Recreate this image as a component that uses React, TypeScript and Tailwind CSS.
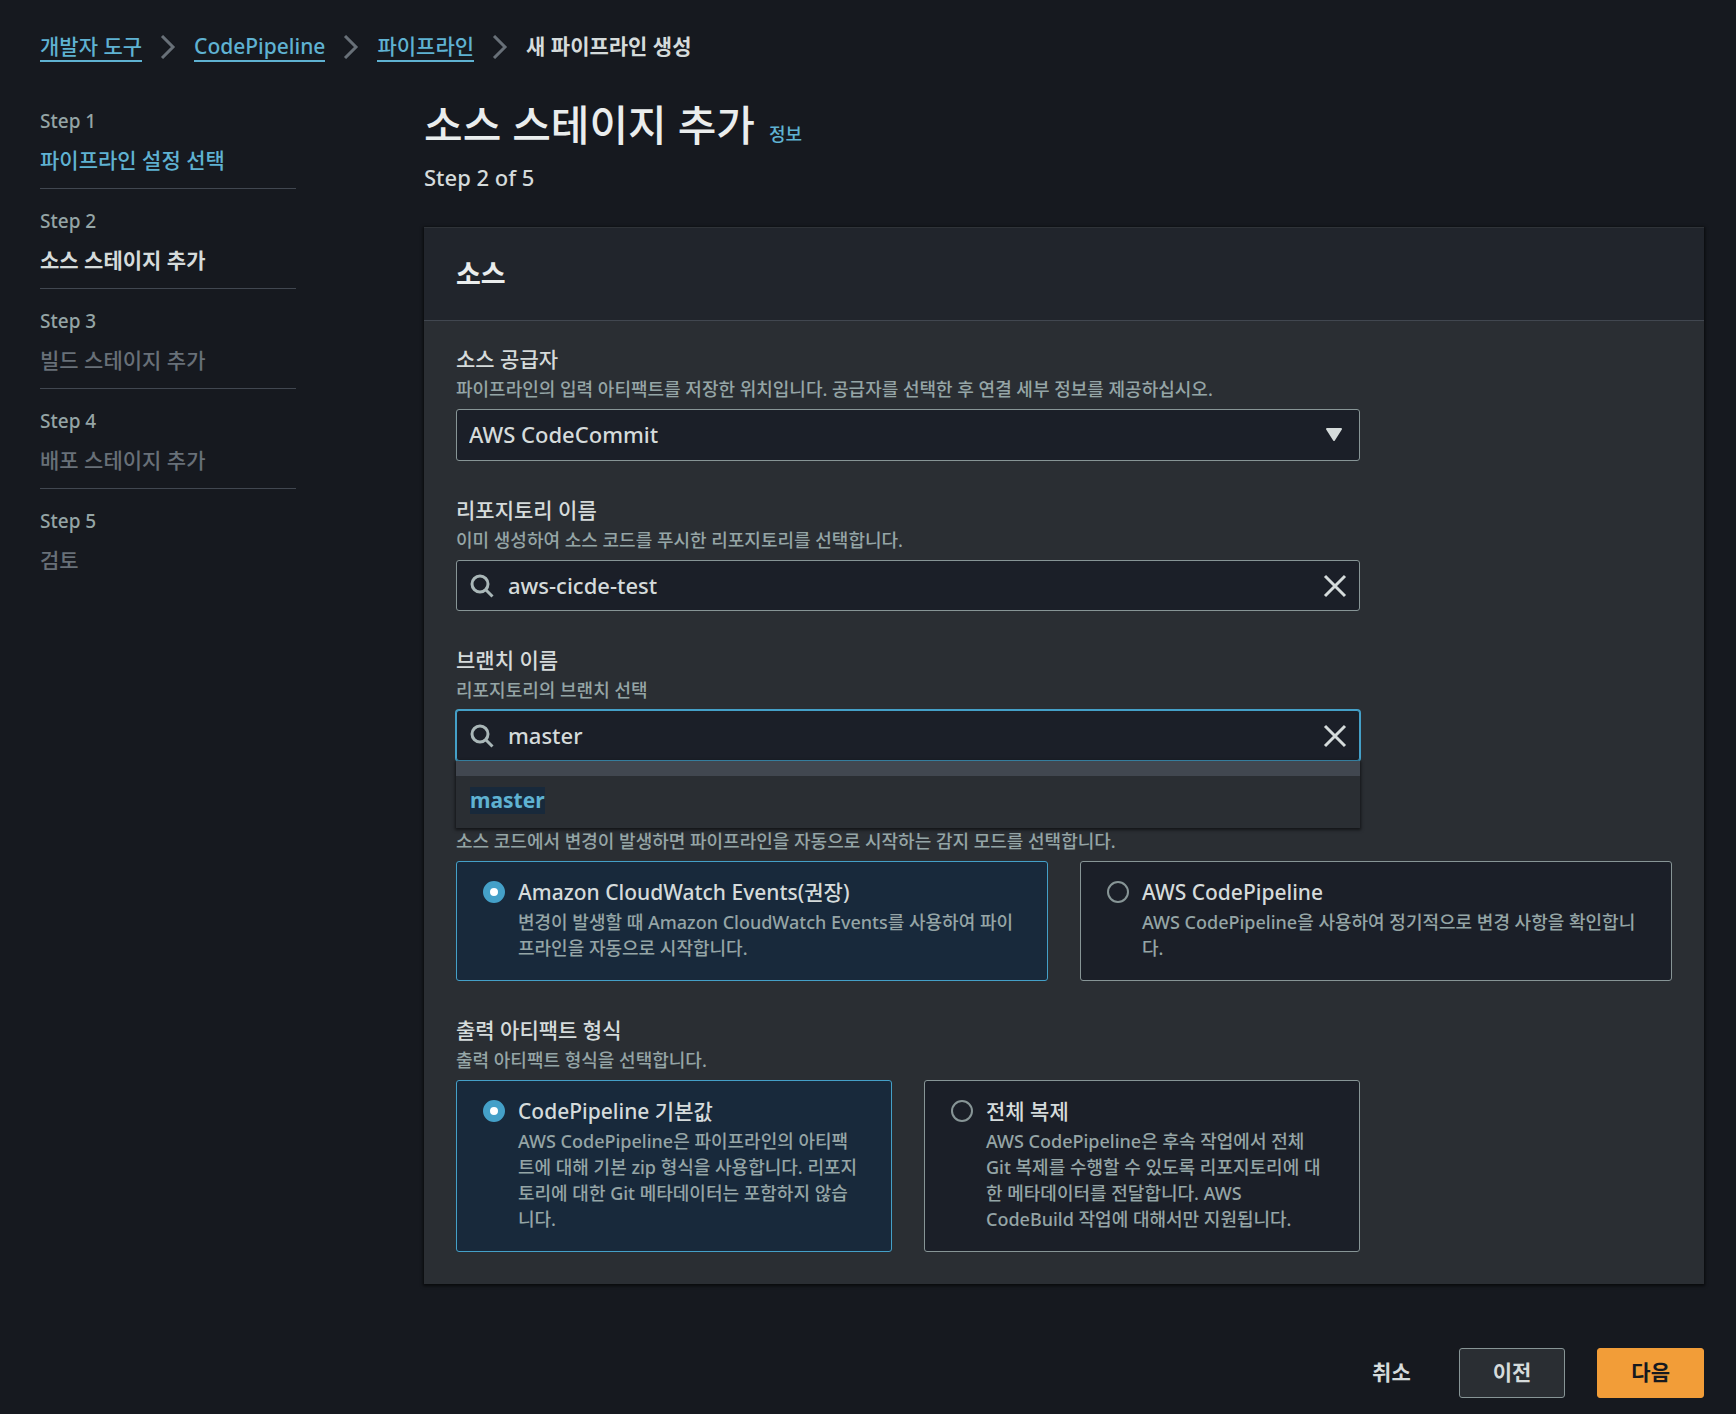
import { useState } from 'react';
import type { ReactNode } from 'react';

const crumbs = ['개발자 도구', 'CodePipeline', '파이프라인'];

const steps = [
  { name: '파이프라인 설정 선택', state: 'done' },
  { name: '소스 스테이지 추가', state: 'current' },
  { name: '빌드 스테이지 추가', state: 'todo' },
  { name: '배포 스테이지 추가', state: 'todo' },
  { name: '검토', state: 'todo' },
];

function ChevronIcon() {
  return (
    <svg aria-hidden="true" className="h-6 w-4 shrink-0" viewBox="0 0 16 24" fill="none">
      <path d="M2 1 L13 12 L2 23" stroke="#687078" strokeWidth="3" />
    </svg>
  );
}

function SearchIcon() {
  return (
    <svg aria-hidden="true" className="h-6 w-6 shrink-0" viewBox="0 0 24 24" fill="none" stroke="#aab7b8" strokeWidth="3">
      <circle cx="10" cy="10" r="8" />
      <path d="M15.5 15.5 L22.5 22.5" />
    </svg>
  );
}

function CloseIcon() {
  return (
    <svg aria-hidden="true" className="h-6 w-6" viewBox="0 0 24 24" fill="none" stroke="#d5dbdb" strokeWidth="3">
      <path d="M2 2 L22 22 M22 2 L2 22" />
    </svg>
  );
}

function FieldHead({ id, label, hint }: { id: string; label: string; hint: string }) {
  return (
    <div className="pb-1.5">
      <label htmlFor={id} className="block text-[21px] leading-8 text-[#d5dbdb]">
        {label}
      </label>
      <p id={id + '-hint'} className="text-lg leading-7 text-[#95a5a6]">
        {hint}
      </p>
    </div>
  );
}

function SearchBox({
  id,
  value,
  focused,
  onChange,
}: {
  id: string;
  value: string;
  focused?: boolean;
  onChange: (value: string) => void;
}) {
  return (
    <div
      className={
        'flex h-[51px] items-center gap-3.5 rounded-[3px] border bg-[#1b1f28] pr-3 pl-[13px] ' +
        (focused ? 'border-[#44a0c8] shadow-[0_0_0_1px_#44a0c8]' : 'border-[#879596]')
      }
    >
      <SearchIcon />
      <input
        id={id}
        type="text"
        value={value}
        aria-describedby={id + '-hint'}
        onChange={(e) => onChange(e.target.value)}
        className="min-w-0 flex-1 bg-transparent pb-0.5 text-[22px] leading-8 text-[#d5dbdb] outline-none"
      />
      <button type="button" aria-label="지우기" onClick={() => onChange('')}>
        <CloseIcon />
      </button>
    </div>
  );
}

function RadioTile({
  group,
  title,
  checked,
  onSelect,
  children,
}: {
  group: string;
  title: string;
  checked: boolean;
  onSelect: () => void;
  children: ReactNode;
}) {
  return (
    <label
      className={
        'flex gap-[13px] rounded-[3px] border pt-3.5 pr-[31px] pb-[19px] pl-[26px] ' +
        (checked ? 'border-[#44a0c8] bg-[#18293b]' : 'border-[#879596] bg-[#1b1f28]')
      }
    >
      <input
        type="radio"
        name={group}
        checked={checked}
        onChange={onSelect}
        className="mt-[5px] size-[22px] shrink-0 appearance-none rounded-full border-2 border-[#879596] checked:border-[7px] checked:border-[#44a0c8] checked:bg-white"
      />
      <span className="min-w-0 flex-1">
        <span className="block text-[21px] leading-8 text-[#d5dbdb]">{title}</span>
        <span className="mt-px block text-lg leading-[26px] text-[#95a5a6]">{children}</span>
      </span>
    </label>
  );
}

export default function App() {
  const [provider, setProvider] = useState('AWS CodeCommit');
  const [repository, setRepository] = useState('aws-cicde-test');
  const [branch, setBranch] = useState('master');
  const [detection, setDetection] = useState('events');
  const [format, setFormat] = useState('default');

  return (
    <div className="min-h-screen bg-[#16191f] pt-8 pr-8 pb-4 pl-10 font-['Noto_Sans','Noto_Sans_CJK_KR',sans-serif] font-medium text-[#d5dbdb]">
      <nav aria-label="탐색 경로">
        <ol className="flex items-center gap-[18px] text-[21px] leading-7">
          {crumbs.map((crumb) => (
            <li key={crumb} className="flex items-center gap-[18px]">
              <a href="#" className="border-b-2 border-[#5fb2d2] text-[#5fb2d2]">
                {crumb}
              </a>
              <ChevronIcon />
            </li>
          ))}
          <li aria-current="page" className="pb-0.5 font-bold">
            새 파이프라인 생성
          </li>
        </ol>
      </nav>

      <div className="flex gap-32 pt-[34px]">
        <ol className="flex w-64 shrink-0 flex-col gap-[19px] pt-3">
          {steps.map((step, i) => (
            <li key={step.name} className={i < steps.length - 1 ? 'border-b border-[#414750] pb-3' : ''}>
              <div className="mb-2.5 text-[19px] leading-[26px] text-[#95a5a6]">Step {i + 1}</div>
              {step.state === 'done' ? (
                <a href="#" className="block text-[21px] leading-8 text-[#5fb2d2]">
                  {step.name}
                </a>
              ) : (
                <div
                  className={
                    'text-[21px] leading-8 ' + (step.state === 'current' ? 'font-bold text-[#d5dbdb]' : 'text-[#687078]')
                  }
                >
                  {step.name}
                </div>
              )}
            </li>
          ))}
        </ol>

        <main className="min-w-0 flex-1">
          <div className="flex items-baseline gap-3.5">
            <h1 className="text-[42px] leading-[58px] text-[#eaeded]">소스 스테이지 추가</h1>
            <a href="#" className="text-lg text-[#5fb2d2]">
              정보
            </a>
          </div>
          <p className="mt-[7px] text-[22px] leading-8">Step 2 of 5</p>

          <section className="mt-[34px] bg-[#2a2e33] shadow-[0_1px_3px_1px_#000000a0]">
            <header className="border-t border-b border-t-[#2f3338] border-b-[#414750] bg-[#21252c] px-8 py-7">
              <h2 className="text-[27px] leading-9 font-bold text-[#eaeded]">소스</h2>
            </header>

            <div className="grid grid-cols-12 gap-x-8 gap-y-[33px] px-8 pt-[22px] pb-8">
              <div className="col-span-9">
                <FieldHead
                  id="provider"
                  label="소스 공급자"
                  hint="파이프라인의 입력 아티팩트를 저장한 위치입니다. 공급자를 선택한 후 연결 세부 정보를 제공하십시오."
                />
                <div className="relative">
                  <select
                    id="provider"
                    value={provider}
                    aria-describedby="provider-hint"
                    onChange={(e) => setProvider(e.target.value)}
                    className="block h-[52px] w-full appearance-none rounded-[3px] border border-[#879596] bg-[#1b1f28] px-3 pb-0.5 text-[22px] text-[#d5dbdb]"
                  >
                    <option>AWS CodeCommit</option>
                  </select>
                  <svg
                    aria-hidden="true"
                    className="pointer-events-none absolute top-[18px] right-[17px] h-[15px] w-[18px]"
                    viewBox="0 0 18 15"
                  >
                    <path d="M2 2 H16 L9 13 Z" fill="#d5dbdb" stroke="#d5dbdb" strokeWidth="2" strokeLinejoin="round" />
                  </svg>
                </div>
              </div>

              <div className="col-span-9">
                <FieldHead id="repository" label="리포지토리 이름" hint="이미 생성하여 소스 코드를 푸시한 리포지토리를 선택합니다." />
                <SearchBox id="repository" value={repository} onChange={setRepository} />
              </div>

              <div className="col-span-9">
                <FieldHead id="branch" label="브랜치 이름" hint="리포지토리의 브랜치 선택" />
                <div className="relative">
                  <SearchBox id="branch" value={branch} focused onChange={setBranch} />
                  <div
                    role="listbox"
                    aria-label="브랜치"
                    className="absolute inset-x-0 top-full z-10 border-t-[15px] border-[#414750] bg-[#2a2e33] shadow-[0_1px_3px_1px_#00000090]"
                  >
                    <button
                      type="button"
                      role="option"
                      aria-selected="true"
                      onClick={() => setBranch('master')}
                      className="flex w-full px-3.5 pt-[11px] pb-3.5 text-[21px] leading-[27px] font-bold text-[#5fb2d2]"
                    >
                      <mark className="bg-[#18293b] text-inherit">master</mark>
                    </button>
                  </div>
                </div>
              </div>

              <div role="radiogroup" aria-labelledby="detection-hint" className="col-span-12 pt-[33px]">
                <p id="detection-hint" className="pb-1.5 text-lg leading-7 text-[#95a5a6]">
                  소스 코드에서 변경이 발생하면 파이프라인을 자동으로 시작하는 감지 모드를 선택합니다.
                </p>
                <div className="grid grid-cols-2 gap-8">
                  <RadioTile
                    group="detection"
                    title="Amazon CloudWatch Events(권장)"
                    checked={detection === 'events'}
                    onSelect={() => setDetection('events')}
                  >
                    변경이 발생할 때 Amazon CloudWatch Events를 사용하여 파이프라인을 자동으로 시작합니다.
                  </RadioTile>
                  <RadioTile
                    group="detection"
                    title="AWS CodePipeline"
                    checked={detection === 'polling'}
                    onSelect={() => setDetection('polling')}
                  >
                    AWS CodePipeline을 사용하여 정기적으로 변경 사항을 확인합니다.
                  </RadioTile>
                </div>
              </div>

              <div role="radiogroup" aria-labelledby="format-label" className="col-span-9">
                <h3 id="format-label" className="text-[21px] leading-8">
                  출력 아티팩트 형식
                </h3>
                <p className="pb-1.5 text-lg leading-7 text-[#95a5a6]">출력 아티팩트 형식을 선택합니다.</p>
                <div className="grid grid-cols-2 gap-8">
                  <RadioTile
                    group="format"
                    title="CodePipeline 기본값"
                    checked={format === 'default'}
                    onSelect={() => setFormat('default')}
                  >
                    AWS CodePipeline은 파이프라인의 아티팩트에 대해 기본 zip 형식을 사용합니다. 리포지토리에 대한 Git 메타데이터는 포함하지 않습니다.
                  </RadioTile>
                  <RadioTile
                    group="format"
                    title="전체 복제"
                    checked={format === 'clone'}
                    onSelect={() => setFormat('clone')}
                  >
                    AWS CodePipeline은 후속 작업에서 전체 Git 복제를 수행할 수 있도록 리포지토리에 대한 메타데이터를 전달합니다. AWS CodeBuild 작업에 대해서만 지원됩니다.
                  </RadioTile>
                </div>
              </div>
            </div>
          </section>

          <div className="mt-16 flex justify-end gap-8 text-[21px] font-bold">
            <button type="button" className="h-[50px] px-4">
              취소
            </button>
            <button type="button" className="h-[50px] rounded-[3px] border border-[#879596] bg-[#2a2e33] px-[33px]">
              이전
            </button>
            <button type="button" className="h-[50px] rounded-[3px] border border-[#f29d38] bg-[#f29d38] px-[33px] text-[#16191f]">
              다음
            </button>
          </div>
        </main>
      </div>
    </div>
  );
}
